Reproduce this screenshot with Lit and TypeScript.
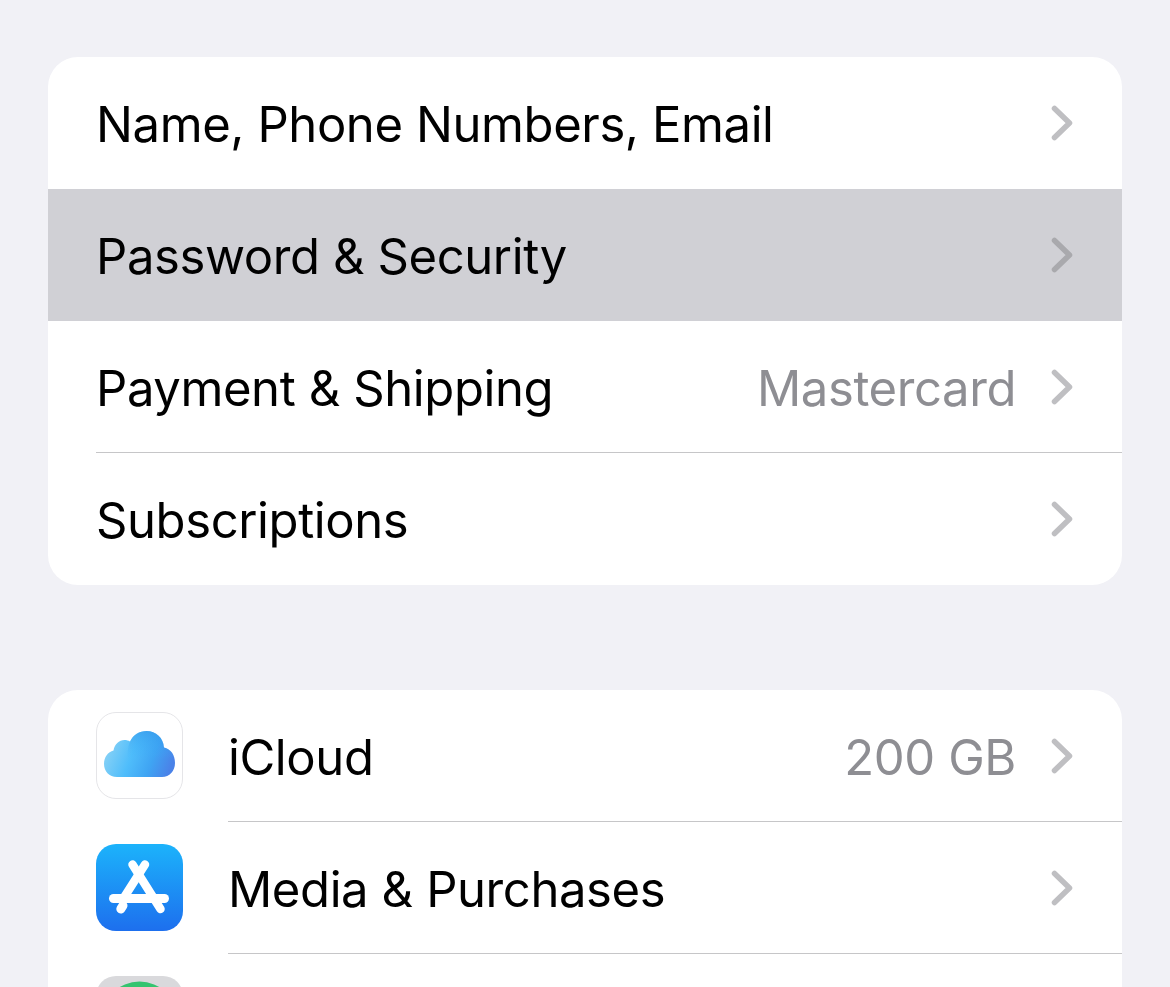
import { LitElement, html, css } from "lit";
import { customElement } from "lit/decorators.js";

const chevron = html`<svg class="chev" width="24" height="38" viewBox="0 0 24 38"><path d="M4.5 4.5 L19.500 19 L4.5 33.500" fill="none" stroke="#bfbfc2" stroke-width="5.5" stroke-linecap="round" stroke-linejoin="round"/></svg>`;

const cloudIcon = html`<svg class="icon" width="87" height="87" viewBox="0 0 87 87">
  <defs>
    <linearGradient id="cl" x1="0" y1="0.3" x2="1" y2="0.55">
      <stop offset="0" stop-color="#8fd4f5"/><stop offset="0.42" stop-color="#4fbdfb"/><stop offset="0.72" stop-color="#3fa4f3"/><stop offset="1" stop-color="#4a82e8"/>
    </linearGradient>
    <linearGradient id="cl2" x1="0" y1="0" x2="0" y2="1">
      <stop offset="0" stop-color="#2f8fe6" stop-opacity="0.5"/><stop offset="0.6" stop-color="#36b0fb" stop-opacity="0"/>
    </linearGradient>
  </defs>
  <rect x="0.5" y="0.5" width="86" height="86" rx="19.5" fill="#fff" stroke="#e5e5e8"/>
  <path d="M21 65 C13 65 8 59 8 52 C8 45 12 40 17.500 38.500 C18.500 32.500 23 28 28.500 28 C30.500 28 32.500 28.500 34 29.500 C37 23 43.500 19 50.500 19 C60 19 67.500 26 68 35.500 C75 37 79 43 79 51 C79 59 73.500 65 66 65 Z" fill="url(#cl)"/>
  <path d="M34 29.500 C37 23 43.500 19 50.500 19 C60 19 67.500 26 68 35.500 C75 37 79 43 79 51 L79 65 L32 65 C31 52 30.500 38 34 29.500 Z" fill="url(#cl2)"/>
</svg>`;

const storeIcon = html`<svg class="icon" width="87" height="87" viewBox="0 0 87 87">
  <defs>
    <linearGradient id="as" x1="0" y1="0" x2="0" y2="1">
      <stop offset="0" stop-color="#1cb3fb"/><stop offset="1" stop-color="#1d6fee"/>
    </linearGradient>
  </defs>
  <rect width="87" height="87" rx="20" fill="url(#as)"/>
  <g fill="none" stroke="#fff" stroke-linecap="round">
    <path stroke-width="8.500" d="M36.500 20.500 L64.500 65"/>
    <path stroke-width="8.500" d="M49 20.500 L27 55"/>
    <path stroke-width="9" d="M17.500 54.500 H68.500"/>
    <path stroke-width="9" d="M27 61.500 L24.800 65"/>
  </g>
</svg>`;

const findIcon = html`<svg class="icon" width="87" height="87" viewBox="0 0 87 87">
  <rect width="87" height="87" rx="20" fill="#d9d9dc"/>
  <circle cx="43.500" cy="43.500" r="38" fill="#34c46f"/>
</svg>`;

interface Row { label: string; value?: string; pressed?: boolean; sep?: boolean; icon?: unknown; }

const group1: Row[] = [
  { label: "Name, Phone Numbers, Email" },
  { label: "Password & Security", pressed: true },
  { label: "Payment & Shipping", value: "Mastercard", sep: true },
  { label: "Subscriptions" },
];
const group2: Row[] = [
  { label: "iCloud", value: "200 GB", sep: true, icon: cloudIcon },
  { label: "Media & Purchases", sep: true, icon: storeIcon },
  { label: "", icon: findIcon },
];

@customElement("app-root")
export class AppRoot extends LitElement {
  static styles = css`
    :host { display: block; height: 987px; overflow: hidden; background: #f1f1f6; font-family: Inter, "Liberation Sans", sans-serif; }
    .page { display: flex; flex-direction: column; gap: 105px; padding: 57px 48px 0; }
    .card { background: #fff; border-radius: 30px; overflow: hidden; flex: none; }
    .row { height: 132px; display: flex; align-items: center; padding-left: 48px; padding-right: 48px; position: relative; box-sizing: border-box; }
    .row.pressed { background: #d0d0d5; }
    .row.sep::after { content: ""; position: absolute; left: 48px; right: 0; bottom: 0; height: 1px; background: #c6c6c8; }
    .row.withicon.sep::after { left: 180px; }
    .icon { flex: none; margin-right: 45px; margin-top: -1px; display: block; }
    .label { font-size: 49px; letter-spacing: -0.4px; color: #000; flex: 1; white-space: nowrap; padding-top: 2px; }
    .value { font-size: 49px; letter-spacing: -0.4px; color: #8e8e93; margin-right: 34px; white-space: nowrap; padding-top: 2px; }
    .chev { flex: none; display: block; }
    .row.pressed .chev path { stroke: #a9a9ad; }
  `;

  private row(r: Row) {
    const cls = ["row", r.pressed ? "pressed" : "", r.sep ? "sep" : "", r.icon ? "withicon" : ""].join(" ");
    return html`<div class=${cls}>
      ${r.icon ?? ""}
      <span class="label">${r.label}</span>
      ${r.value ? html`<span class="value">${r.value}</span>` : ""}
      ${r.label ? chevron : ""}
    </div>`;
  }

  render() {
    return html`<div class="page">
      <div class="card">${group1.map((r) => this.row(r))}</div>
      <div class="card">${group2.map((r) => this.row(r))}</div>
    </div>`;
  }
}
